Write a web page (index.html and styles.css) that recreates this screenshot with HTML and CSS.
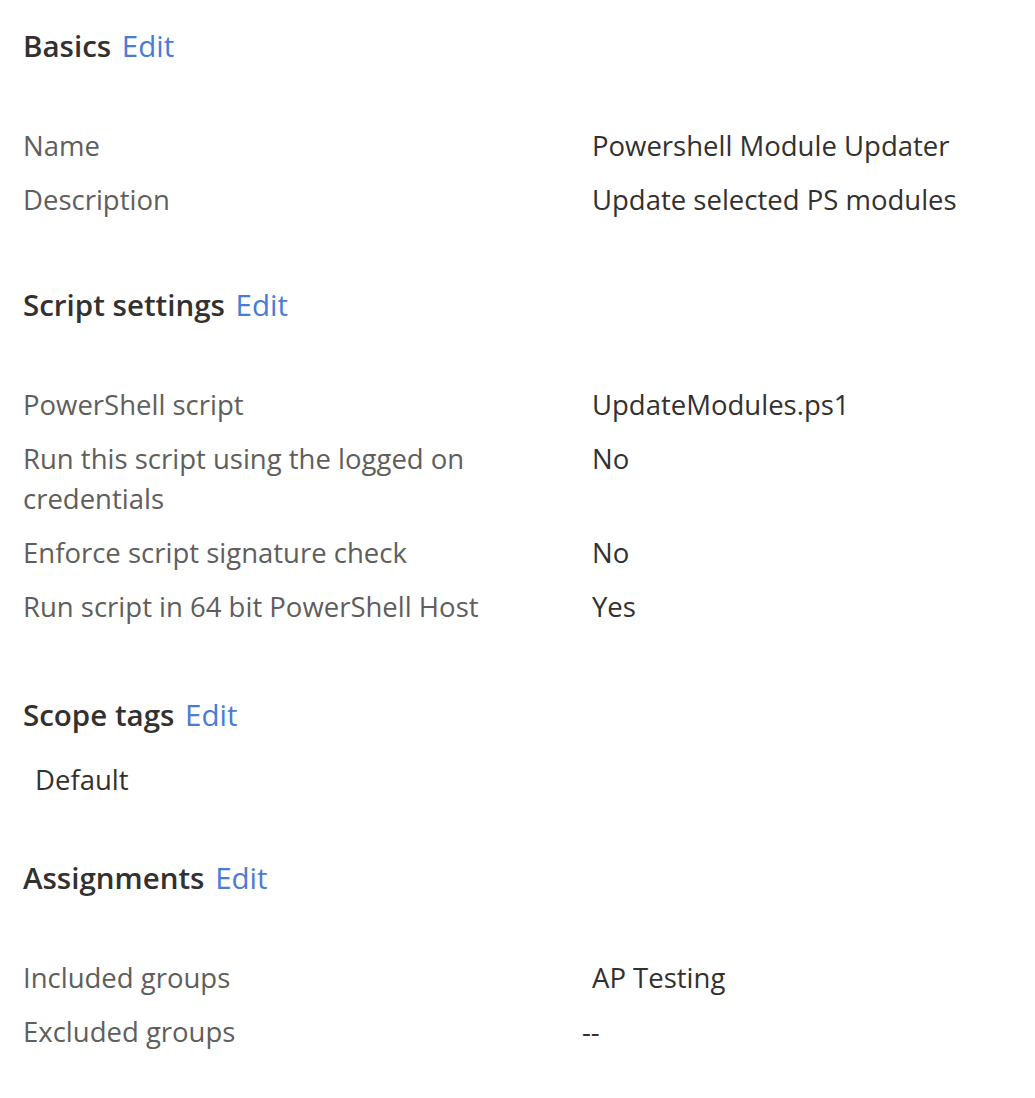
FILE: index.html
```html
<!DOCTYPE html>
<html lang="en">
<head>
<meta charset="utf-8">
<title>Review</title>
<link rel="stylesheet" href="styles.css">
</head>
<body>
<main class="page">
  <section class="section">
    <h2 class="heading">Basics <a class="edit" href="#">Edit</a></h2>
    <dl class="props">
      <dt>Name</dt><dd>Powershell Module Updater</dd>
      <dt>Description</dt><dd>Update selected PS modules</dd>
    </dl>
  </section>
  <section class="section section-script">
    <h2 class="heading">Script settings <a class="edit" href="#">Edit</a></h2>
    <dl class="props">
      <dt>PowerShell script</dt><dd>UpdateModules.ps1</dd>
      <dt>Run this script using the logged on credentials</dt><dd>No</dd>
      <dt>Enforce script signature check</dt><dd>No</dd>
      <dt>Run script in 64 bit PowerShell Host</dt><dd>Yes</dd>
    </dl>
  </section>
  <section class="section section-tags">
    <h2 class="heading">Scope tags <a class="edit" href="#">Edit</a></h2>
    <div class="tag">Default</div>
  </section>
  <section class="section">
    <h2 class="heading">Assignments <a class="edit" href="#">Edit</a></h2>
    <dl class="props">
      <dt>Included groups</dt><dd>AP Testing</dd>
      <dt>Excluded groups</dt><dd class="empty">--</dd>
    </dl>
  </section>
</main>
</body>
</html>
```
FILE: styles.css
```css
html, body {
  margin: 0;
  padding: 0;
  background: #ffffff;
}
body {
  font-family: "Open Sans", "Noto Sans", "Liberation Sans", sans-serif;
  color: #323130;
}
.page {
  padding: 26px 23px 0 23px;
  display: flex;
  flex-direction: column;
}
.section {
  margin-bottom: 65px;
}
.section-script {
  margin-bottom: 68px;
}
.section-tags {
  margin-bottom: 58px;
}
.heading {
  margin: 0;
  font-size: 29.5px;
  font-weight: 600;
  line-height: 40px;
  color: #323130;
}
.edit {
  font-weight: 400;
  color: #4a7cd6;
  text-decoration: none;
  margin-left: 3px;
}
.props {
  margin: 60px 0 0 0;
  display: grid;
  grid-template-columns: 569px 1fr;
  row-gap: 14px;
  font-size: 27.5px;
  line-height: 40px;
}
.props dt {
  color: #605e5c;
  padding-right: 70px;
}
.props dd {
  margin: 0;
  color: #323130;
}
.props dd.empty {
  margin-left: -10px;
}
.tag {
  margin-top: 25px;
  padding-left: 12px;
  font-size: 27.5px;
  line-height: 40px;
  color: #323130;
}
```
